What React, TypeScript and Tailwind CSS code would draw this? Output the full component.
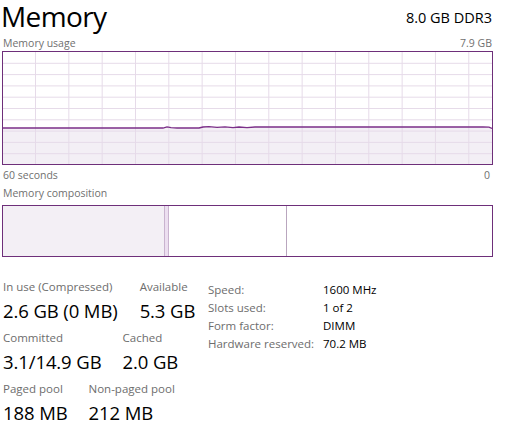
import React from 'react';

const font = {fontFamily: '"Open Sans", "Noto Sans", sans-serif'};

const W = 489;
const H = 112;

function UsageChart() {
    const vLines = Array.from({length: 15}, (_, i) => 32.5 + i * 33.33).filter(x => x < W);
    const hLines = Array.from({length: 9}, (_, i) => 11.3 * (i + 1));
    const pts: [number, number][] = [
        [0, 76], [160, 76], [164, 74.8], [168, 75.6], [174, 76], [196, 76], [200, 75], [206, 74.6],
        [214, 75.4], [222, 74.8], [230, 75.6], [236, 75], [244, 75.6], [252, 75], [480, 75], [486, 75.2], [W, 76.5],
    ];
    const line = pts.map(([x, y], i) => `${i ? 'L' : 'M'}${x} ${y}`).join(' ');
    const area = `${line} L${W} ${H} L0 ${H} Z`;
    return (
        <svg width={W} height={H} className="block">
            <path d={area} fill="#f3eff5"/>
            {vLines.map((x, i) => (
                <line key={'v' + i} x1={x} y1={0} x2={x} y2={H} stroke="#e6dbe9" strokeWidth={1}/>
            ))}
            {hLines.map((y, i) => (
                <line key={'h' + i} x1={0} y1={y} x2={W} y2={y} stroke="#e6dbe9" strokeWidth={1}/>
            ))}
            <path d={line} fill="none" stroke="#7b2f88" strokeWidth={1.3}/>
        </svg>
    );
}

function Stat({label, value}: {label: string; value: string}) {
    return (
        <div className="flex flex-col">
            <div className="text-[11.5px] leading-[16px] text-[#6d6d6d]">{label}</div>
            <div className="text-[18.5px] leading-[26px] text-black mt-[3px] tracking-[-0.1px]">{value}</div>
        </div>
    );
}

export default function App() {
    return (
        <div className="w-[511px] h-[438px] bg-white overflow-hidden" style={font}>
            {/* Header */}
            <div className="flex justify-between items-start pl-[1px] pr-[19px]">
                <h1 className="text-[28px] leading-[38px] -mt-[3px] text-black tracking-[-0.6px]">Memory</h1>
                <div className="text-[14.5px] leading-[20px] text-black mt-[8px]">8.0 GB DDR3</div>
            </div>

            {/* Usage chart */}
            <div className="flex justify-between text-[10.5px] leading-[14px] text-[#707070] px-[3px] mt-[1px]">
                <span>Memory usage</span>
                <span className="mr-[16px]">7.9 GB</span>
            </div>
            <div className="ml-[2px] mt-[1px] w-[491px] border border-[#6e2f7a]">
                <UsageChart/>
            </div>
            <div className="flex justify-between text-[10.5px] leading-[14px] text-[#707070] px-[3px] mt-[3px]">
                <span>60 seconds</span>
                <span className="mr-[18px]">0</span>
            </div>

            {/* Composition */}
            <div className="text-[10.5px] leading-[14px] text-[#707070] px-[3px] mt-[4px]">Memory composition</div>
            <div className="ml-[2px] mt-[5px] w-[491px] h-[52px] border border-[#6e2f7a] flex">
                <div className="w-[161px] bg-[#f3eff5]"/>
                <div className="w-[5px] bg-[#ecdff0] border-x border-[#c9b3cf]"/>
                <div className="w-[118px] border-r border-[#b9a6be]"/>
                <div className="flex-1"/>
            </div>

            {/* Stats */}
            <div className="flex items-start mt-[22px] pl-[3px]">
                <div className="w-[205px] flex flex-col gap-[6px]">
                    <div className="flex gap-[22px]">
                        <Stat label="In use (Compressed)" value="2.6 GB (0 MB)"/>
                        <Stat label="Available" value="5.3 GB"/>
                    </div>
                    <div className="flex gap-[21px]">
                        <Stat label="Committed" value="3.1/14.9 GB"/>
                        <Stat label="Cached" value="2.0 GB"/>
                    </div>
                    <div className="flex gap-[21px]">
                        <Stat label="Paged pool" value="188 MB"/>
                        <Stat label="Non-paged pool" value="212 MB"/>
                    </div>
                </div>
                <div className="grid grid-cols-[115px_auto] content-start text-[11.5px] leading-[18px] mt-[2px]">
                    <span className="text-[#6d6d6d]">Speed:</span><span className="text-black">1600 MHz</span>
                    <span className="text-[#6d6d6d]">Slots used:</span><span className="text-black">1 of 2</span>
                    <span className="text-[#6d6d6d]">Form factor:</span><span className="text-black">DIMM</span>
                    <span className="text-[#6d6d6d]">Hardware reserved:</span><span className="text-black">70.2 MB</span>
                </div>
            </div>
        </div>
    );
}
